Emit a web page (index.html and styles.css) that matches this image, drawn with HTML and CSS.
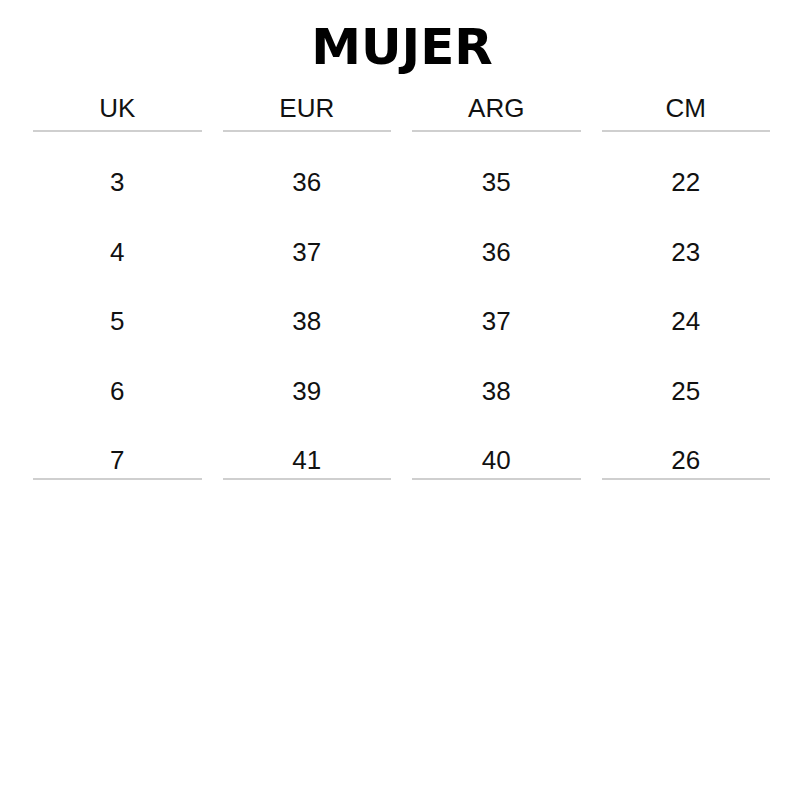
FILE: index.html
```html
<!DOCTYPE html>
<html lang="es">
<head>
<meta charset="utf-8">
<title>Guía de talles - Mujer</title>
<link rel="stylesheet" href="styles.css">
</head>
<body>
<main class="page">
  <h1 class="title">MUJER</h1>
  <div class="table">
    <div class="col">
      <div class="head">UK</div>
      <div class="cells"><div>3</div><div>4</div><div>5</div><div>6</div><div>7</div></div>
    </div>
    <div class="col">
      <div class="head">EUR</div>
      <div class="cells"><div>36</div><div>37</div><div>38</div><div>39</div><div>41</div></div>
    </div>
    <div class="col">
      <div class="head">ARG</div>
      <div class="cells"><div>35</div><div>36</div><div>37</div><div>38</div><div>40</div></div>
    </div>
    <div class="col">
      <div class="head">CM</div>
      <div class="cells"><div>22</div><div>23</div><div>24</div><div>25</div><div>26</div></div>
    </div>
  </div>
</main>
</body>
</html>
```
FILE: styles.css
```css
html, body {
  margin: 0;
  padding: 0;
  background: #fff;
}
.page {
  width: 800px;
  height: 800px;
  padding-top: 17px;
  box-sizing: border-box;
  font-family: "Liberation Sans", Arial, sans-serif;
  color: #111;
}
.title {
  margin: 0;
  text-align: center;
  font-family: "DejaVu Sans", Verdana, sans-serif;
  font-weight: 900;
  font-size: 50px;
  line-height: 60px;
  color: #000;
  padding-left: 4px;
}
.table {
  margin: 13px 0 0 33px;
  display: grid;
  grid-template-columns: repeat(4, 168.5px);
  column-gap: 21px;
}
.col {
  display: flex;
  flex-direction: column;
  text-align: center;
}
.head {
  font-size: 26px;
  line-height: 36px;
  padding-bottom: 4px;
  border-bottom: 2px solid #cfcfcf;
}
.cells {
  display: flex;
  flex-direction: column;
  gap: 33.5px;
  padding-top: 32px;
  border-bottom: 2px solid #cfcfcf;
  font-size: 26px;
  line-height: 36px;
}
```
